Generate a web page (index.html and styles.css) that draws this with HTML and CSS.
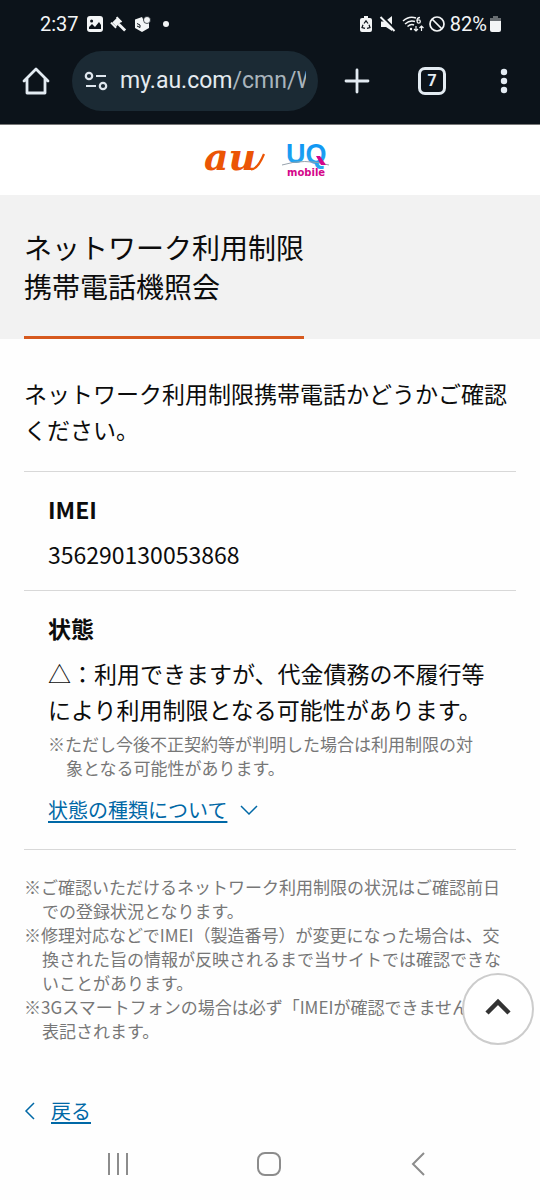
FILE: index.html
```html
<!DOCTYPE html>
<html lang="ja">
<head>
<meta charset="utf-8">
<meta name="viewport" content="width=device-width, initial-scale=1">
<title>ネットワーク利用制限携帯電話機照会</title>
<link rel="stylesheet" href="styles.css">
</head>
<body>
<div class="browser">
  <div class="status">
    <div class="status-group">
      <span class="clock">2:37</span>
      <svg width="16" height="16" viewBox="0 0 16 16"><rect width="16" height="16" rx="3" fill="#f3f5f6"/><circle cx="4.600" cy="5" r="1.500" fill="#0c131a"/><path d="M2 13v-2l3-3 3 3 4-5 2 3v4z" fill="#0c131a"/></svg>
      <svg width="17" height="16" viewBox="0 0 18 16" fill="none" stroke="#f3f5f6"><path d="M4.500 8.500l5-5" stroke-width="6"/><path d="M1 6.500l5.500 5.500M7 .8l5.200 5.200" stroke-width="2"/><path d="M9 8l7 7" stroke-width="3"/></svg>
      <svg width="17" height="16" viewBox="0 0 17 16"><path d="M8 1L1 3.500v8.500l7 4 7-4V7L10 5z" fill="#f3f5f6"/><circle cx="13" cy="4" r="3.500" fill="#f3f5f6" stroke="#0c131a" stroke-width=".7"/><path d="M3 7.500l3 1.500v2.500M3 10l3 1.500" fill="none" stroke="#0c131a"/></svg>
      <span class="more-dot"></span>
    </div>
    <div class="status-group tight">
      <svg width="12" height="16" viewBox="0 0 12 16"><path d="M4 0h4v2h2q2 0 2 2v10q0 2-2 2H2q-2 0-2-2V4q0-2 2-2h2z" fill="#f3f5f6"/><path d="M4 7.500L6 4.800l2 2.700M9 8.800l1 2.700-3 .8M5 12.300l-3-.8 1-2.700" fill="none" stroke="#0c131a" stroke-width="1.200"/></svg>
      <svg class="mute" width="16" height="16" viewBox="0 0 16 16"><path d="M1 5.500h4L12 0v15L6 11H1z" fill="#f3f5f6"/><path d="M1.500-.5l15 15" stroke="#0c131a" stroke-width="2"/><path d="M.5 1l14 14" stroke="#f3f5f6" stroke-width="2"/></svg>
      <svg width="22" height="17" viewBox="0 0 22 17" fill="none" stroke="#f3f5f6" stroke-width="1.500"><path d="M1 5Q7-.5 14 2M3 8q5-4.500 10-2.500M5.500 10.500Q9 7.500 12 9"/><circle cx="9" cy="13" r="1.200" fill="#f3f5f6" stroke="none"/><path d="M18 1.500q-3 0-3 3.500" stroke-width="1.300"/><circle cx="16.700" cy="5.500" r="1.600" stroke-width="1.300"/><path d="M14 10v5m-2-2l2 2 2-2M19.500 15v-5m-2 2l2-2 2 2" stroke-width="1.200"/></svg>
      <svg width="16" height="16" viewBox="0 0 16 16" fill="none" stroke="#f3f5f6" stroke-width="1.700"><circle cx="8" cy="8" r="7"/><path d="M3 3l10 10"/></svg>
      <span class="percent">82%</span>
      <svg width="11" height="16" viewBox="0 0 11 16"><path d="M3 0h5v2h3v4H0V2h3z" fill="#686d71"/><path d="M0 5h11v9q0 2-2 2H2q-2 0-2-2z" fill="#f3f5f6"/></svg>
    </div>
  </div>
  <div class="toolbar">
    <button class="tool" aria-label="ホーム"><svg width="28" height="28" viewBox="0 0 28 28" fill="none" stroke="#e3ebf2" stroke-width="2.800" stroke-linejoin="round" stroke-linecap="round"><path d="M2 14L14 2l12 12M5 11.500V26h18V11.500"/></svg></button>
    <label class="address">
      <svg width="24" height="20" viewBox="0 0 24 20" fill="none" stroke="#dfe7ee" stroke-width="2.200"><circle cx="5" cy="5" r="3.200"/><path d="M12 5h10M2 15h10"/><circle cx="19" cy="15" r="3.200"/></svg>
      <span class="url">my.au.com<span class="url-path">/cmn/W</span></span>
    </label>
    <button class="tool" aria-label="新しいタブ"><svg width="26" height="26" viewBox="0 0 26 26" stroke="#e3ebf2" stroke-width="2.800" stroke-linecap="round"><path d="M2 13h22M13 2v22"/></svg></button>
    <button class="tool" aria-label="タブ一覧"><span class="tabs">7</span></button>
    <button class="tool" aria-label="メニュー"><svg width="8" height="26" viewBox="0 0 8 26" fill="#e3ebf2"><circle cx="4" cy="4" r="3.200"/><circle cx="4" cy="13" r="3.200"/><circle cx="4" cy="22" r="3.200"/></svg></button>
  </div>
</div>

<header class="brands">
  <svg width="62" height="36" viewBox="0 0 62 36" role="img" aria-label="au"><text class="au-text" x="0" y="28">au</text><path d="M47 27.500Q54 27 60 12" fill="none" stroke="#eb5505" stroke-width="2.200"/></svg>
  <svg width="48" height="40" viewBox="0 0 48 40" role="img" aria-label="UQ mobile">
    <defs><linearGradient id="uq" x1="0" y1="0" x2="0" y2="1"><stop offset="0" stop-color="#0a93f5"/><stop offset="1" stop-color="#2aa9ee"/></linearGradient></defs>
    <text class="uq-text" x="4" y="23" fill="url(#uq)">UQ</text>
    <path d="M0 25Q22 18 47 25" fill="none" stroke="#98a3ad" stroke-width="1"/>
    <path d="M34 16h4l6 9h-5z" fill="#d4078a"/>
    <text class="mobile-text" x="5" y="36">mobile</text>
  </svg>
</header>

<section class="hero">
  <h1>ネットワーク利用制限<br>携帯電話機照会</h1>
</section>

<main class="content">
  <p class="intro">ネットワーク利用制限携帯電話かどうかご確認ください。</p>
  <dl class="results">
    <div class="result">
      <dt>IMEI</dt>
      <dd>356290130053868</dd>
    </div>
    <div class="result">
      <dt>状態</dt>
      <dd>△：利用できますが、代金債務の不履行等により利用制限となる可能性があります。
        <p class="note inner">※ただし今後不正契約等が判明した場合は利用制限の対象となる可能性があります。</p>
        <div class="link-row"><a href="#types">状態の種類について</a><svg width="18" height="10" viewBox="0 0 18 10" fill="none" stroke="#0068a6" stroke-width="1.500"><path d="M1 1l8 8 8-8"/></svg></div>
      </dd>
    </div>
  </dl>
  <div class="notes">
    <p class="note">※ご確認いただけるネットワーク利用制限の状況はご確認前日での登録状況となります。</p>
    <p class="note">※修理対応などでIMEI（製造番号）が変更になった場合は、交換された旨の情報が反映されるまで当サイトでは確認できないことがあります。</p>
    <p class="note">※3Gスマートフォンの場合は必ず「IMEIが確認できません」と表記されます。</p>
  </div>
  <div class="back"><svg width="11" height="18" viewBox="0 0 11 18" fill="none" stroke="#0068a6" stroke-width="1.500"><path d="M10 1L2 9l8 8"/></svg><a href="#back">戻る</a></div>
</main>

<button class="to-top" aria-label="ページの先頭へ"><svg width="26" height="18" viewBox="0 0 26 18" fill="none" stroke="#333" stroke-width="4.500"><path d="M2 15L13 4l11 11"/></svg></button>

<nav class="system-nav" aria-label="システム">
  <button aria-label="最近使ったアプリ"><svg width="24" height="24" viewBox="0 0 24 24" stroke="#8c8c8c" stroke-width="2"><path d="M3 1v22M12 1v22M21 1v22"/></svg></button>
  <button aria-label="ホーム画面"><svg width="24" height="24" viewBox="0 0 24 24" fill="none" stroke="#8c8c8c" stroke-width="2"><rect x="1" y="1" width="22" height="22" rx="7"/></svg></button>
  <button aria-label="戻る"><svg width="24" height="24" viewBox="0 0 24 24" fill="none" stroke="#8c8c8c" stroke-width="2"><path d="M16 1L5 12l11 11"/></svg></button>
</nav>
</body>
</html>
```
FILE: styles.css
```css
* { box-sizing: border-box; }
body {
  margin: 0;
  min-height: 100vh;
  display: flex;
  flex-direction: column;
  background: #fefefe;
  color: #0c0c0c;
  font-family: "Noto Sans CJK JP", sans-serif;
  font-size: 23px;
  line-height: 36px;
}
svg { display: block; flex: none; overflow: visible; }
button { padding: 0; border: 0; background: none; font: inherit; }
h1, p, dl, dd { margin: 0; }
a { color: #0068a6; text-underline-offset: 3px; text-decoration-thickness: 2px; }

.browser {
  background: #0c131a;
  color: #f3f5f6;
  border-bottom: 1px solid #777;
  font-family: Roboto, sans-serif;
}
.status {
  display: flex;
  justify-content: space-between;
  align-items: center;
  height: 48px;
  padding: 0 39px 0 40px;
  font-size: 20px;
  line-height: 24px;
}
.status-group { display: flex; align-items: center; gap: 7px; }
.status-group.tight { gap: 5px; }
.clock { margin-right: 1px; }
.mute { margin: 0 1px 0 3px; }
.percent { margin-right: -2px; }
.more-dot { width: 6px; height: 6px; margin-left: 5px; border-radius: 50%; background: #f3f5f6; }
.toolbar { display: flex; align-items: center; padding: 3px 0 13px; }
.tool { display: flex; justify-content: center; align-items: center; width: 72px; height: 60px; flex: none; }
.tool:nth-child(3) { width: 78px; }
.address {
  flex: 1;
  min-width: 0;
  display: flex;
  align-items: center;
  gap: 12px;
  height: 60px;
  padding: 0 12px;
  border-radius: 30px;
  background: #1b2a34;
}
.url {
  flex: 1;
  min-width: 0;
  overflow: hidden;
  white-space: nowrap;
  font-size: 23px;
  color: #e4ebf0;
}
.url-path { color: #a9b4bc; }
.tabs {
  width: 28px;
  height: 28px;
  border: 3px solid #e3ebf2;
  border-radius: 7px;
  color: #e3ebf2;
  font: 700 16px/22px Roboto, sans-serif;
  text-align: center;
}

.brands { display: flex; justify-content: center; align-items: center; gap: 16px; height: 70px; padding-right: 6px; background: #fff; }
.au-text { font: italic 700 38px "DejaVu Serif", serif; fill: #eb5505; }
.uq-text { font: 700 27px "Liberation Sans", sans-serif; }
.mobile-text { font: 700 10px "DejaVu Sans", sans-serif; fill: #d4078a; }

.hero { padding: 0 24px; background: #f2f2f2; }
h1 {
  display: inline-block;
  vertical-align: top;
  padding: 33px 0 30px;
  border-bottom: 3px solid #d6591e;
  font-size: 28px;
  font-weight: 400;
  line-height: 39px;
}

.content { flex: 1; padding: 36px 24px 0; }
.results { margin-top: 24px; border-bottom: 1px solid #d8d8d8; }
.result { padding: 19px 24px 18px; border-top: 1px solid #d8d8d8; }
.result:last-child { padding-bottom: 24px; }
dt { margin-bottom: 9px; font-weight: 700; }
.note { padding-left: 18px; text-indent: -18px; color: #777; font-size: 17px; line-height: 24px; }
.note.inner { margin: 5px 0 15px; padding-right: 8px; }
.link-row { display: flex; align-items: center; gap: 13px; font-size: 20px; line-height: 30px; }
.notes { margin-top: 25px; }
.back { display: flex; align-items: center; gap: 16px; margin-top: 53px; font-size: 20px; line-height: 30px; }

.to-top {
  position: fixed;
  right: 6px;
  bottom: 155px;
  width: 72px;
  height: 72px;
  display: flex;
  justify-content: center;
  align-items: center;
  padding-bottom: 4px;
  border: 2px solid #ccc;
  border-radius: 50%;
  background: #fff;
}
.system-nav { display: flex; justify-content: space-between; align-items: center; height: 72px; padding: 0 106px; }
.system-nav button:last-child { margin-right: 2px; }
```
